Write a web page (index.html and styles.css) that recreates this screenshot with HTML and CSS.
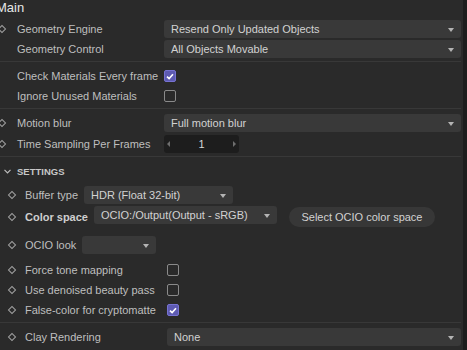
FILE: index.html
```
<!DOCTYPE html>
<html>
<head>
	<title>Render settings</title>
	<meta charset="utf-8">
	<link rel="stylesheet" href="styles.css">
</head>
<body>
	<div class="panel">
		<div class="title">Main</div>

		<div class="group top">
			<div class="row">
				<span class="key on"></span>
				<span class="label">Geometry Engine</span>
				<div class="select grow">Resend Only Updated Objects<i class="caret"></i></div>
			</div>
			<div class="row">
				<span class="key"></span>
				<span class="label">Geometry Control</span>
				<div class="select grow">All Objects Movable<i class="caret"></i></div>
			</div>
		</div>

		<div class="sep"></div>

		<div class="group top checks">
			<div class="row">
				<span class="key"></span>
				<span class="label">Check Materials Every frame</span>
				<span class="check checked"><svg width="8" height="7" viewBox="0 0 8 7"><polyline points="1,3.6 3.1,5.6 7,1.2" fill="none" stroke="#fff" stroke-width="1.6"/></svg></span>
			</div>
			<div class="row">
				<span class="key"></span>
				<span class="label">Ignore Unused Materials</span>
				<span class="check"></span>
			</div>
		</div>

		<div class="sep"></div>

		<div class="group top motion">
			<div class="row">
				<span class="key on"></span>
				<span class="label">Motion blur</span>
				<div class="select grow">Full motion blur<i class="caret"></i></div>
			</div>
			<div class="row">
				<span class="key on"></span>
				<span class="label">Time Sampling Per Frames</span>
				<div class="spin"><i class="arrow-l"></i><span>1</span><i class="arrow-r"></i></div>
			</div>
		</div>

		<div class="sep"></div>

		<div class="header">
			<svg class="chevron" width="7" height="5" viewBox="0 0 7 5"><polyline points="0.5,0.8 3.5,3.8 6.5,0.8" fill="none" stroke="#bdbdbd" stroke-width="1.2"/></svg>
			<span>SETTINGS</span>
		</div>

		<div class="group sub">
			<div class="row">
				<span class="key on"></span>
				<span class="label auto">Buffer type</span>
				<div class="select w-buffer">HDR (Float 32-bit)<i class="caret"></i></div>
			</div>
			<div class="row tall">
				<span class="key on"></span>
				<span class="label auto strong">Color space</span>
				<div class="select w-color">OCIO:/Output(Output - sRGB)<i class="caret"></i></div>
				<button class="pill">Select OCIO color space</button>
			</div>
			<div class="row look">
				<span class="key on"></span>
				<span class="label auto">OCIO look</span>
				<div class="select w-look"><i class="caret"></i></div>
			</div>
			<div class="row tone">
				<span class="key on"></span>
				<span class="label">Force tone mapping</span>
				<span class="check"></span>
			</div>
			<div class="row">
				<span class="key on"></span>
				<span class="label">Use denoised beauty pass</span>
				<span class="check"></span>
			</div>
			<div class="row">
				<span class="key on"></span>
				<span class="label">False-color for cryptomatte</span>
				<span class="check checked"><svg width="8" height="7" viewBox="0 0 8 7"><polyline points="1,3.6 3.1,5.6 7,1.2" fill="none" stroke="#fff" stroke-width="1.6"/></svg></span>
			</div>
		</div>

		<div class="sep"></div>

		<div class="group sub clay">
			<div class="row">
				<span class="key on"></span>
				<span class="label">Clay Rendering</span>
				<div class="select grow">None<i class="caret"></i></div>
			</div>
		</div>
	</div>
	<div class="gutter"></div>
</body>
</html>
```

FILE: styles.css
```
html, body {
	margin: 0;
	height: 350px;
	overflow: hidden;
}

body {
	display: flex;
	background-color: #2a2a2a;
	color: #bfbfbf;
	font-family: "Liberation Sans", Arial, sans-serif;
	font-size: 11px;
}

.panel {
	flex: 1;
	padding-right: 2px;
	overflow: hidden;
}

.gutter {
	width: 4px;
	background-color: #1d1d1d;
}

.title {
	height: 19px;
	line-height: 16px;
	margin-left: -4px;
	font-size: 13px;
	color: #e6e6e6;
}

.row {
	display: flex;
	align-items: center;
	height: 20px;
}

.key {
	flex: none;
	width: 9px;
	height: 9px;
	display: flex;
	align-items: center;
	justify-content: center;
}

.key.on::before {
	content: "";
	width: 4px;
	height: 4px;
	border: 1.4px solid #a0a0a0;
	transform: rotate(45deg);
}

.top .key {
	margin-left: -3px;
	margin-right: 11px;
}

.sub .row {
	padding-left: 7px;
}

.sub .key {
	margin-right: 9px;
}

.label {
	flex: none;
	width: 147px;
	white-space: nowrap;
}

.sub .label {
	width: 142px;
}

.sub .label.auto {
	width: auto;
	margin-right: 6px;
}

.label.strong {
	font-weight: bold;
	color: #cfcfcf;
}

.select {
	position: relative;
	box-sizing: border-box;
	height: 18px;
	line-height: 18px;
	padding-left: 7px;
	background-color: #393939;
	border-radius: 3px;
	color: #d2d2d2;
	white-space: nowrap;
}

.grow {
	flex: 1;
}

.w-buffer {
	width: 149px;
}

.w-color {
	width: 183px;
	align-self: flex-start;
}

.w-look {
	width: 74px;
}

.caret {
	position: absolute;
	right: 7px;
	top: 8px;
	border-left: 3px solid transparent;
	border-right: 3px solid transparent;
	border-top: 4px solid #b4b4b4;
}

.check {
	flex: none;
	box-sizing: border-box;
	width: 12px;
	height: 12px;
	border: 1.5px solid #8a8a8a;
	border-radius: 2px;
	display: flex;
	align-items: center;
	justify-content: center;
}

.check.checked {
	background-color: #5d5ab2;
	border-color: #7773d2;
}

.spin {
	box-sizing: border-box;
	width: 75px;
	height: 18px;
	padding: 0 3px;
	display: flex;
	align-items: center;
	justify-content: space-between;
	background-color: #1d1d1d;
	border-radius: 3px;
	color: #d6d6d6;
}

.arrow-l {
	border-top: 3px solid transparent;
	border-bottom: 3px solid transparent;
	border-right: 3px solid #6e6e6e;
}

.arrow-r {
	border-top: 3px solid transparent;
	border-bottom: 3px solid transparent;
	border-left: 3px solid #6e6e6e;
}

.sep {
	height: 1px;
	background-color: #383838;
	margin: 2px 0 4px;
}

.motion .row + .row {
	margin-top: 1px;
}

.header {
	display: flex;
	align-items: center;
	height: 20px;
	margin-top: 2px;
	font-size: 9.5px;
	font-weight: bold;
	color: #c8c8c8;
}

.chevron {
	margin-left: 4px;
	margin-right: 6px;
}

.sub {
	margin-top: 4px;
}

.row.tall {
	height: 22px;
	margin-top: 1px;
}

.pill {
	box-sizing: border-box;
	width: 146px;
	height: 20px;
	margin-left: 12px;
	padding: 0;
	border: none;
	border-radius: 10px;
	background-color: #373737;
	color: #d2d2d2;
	font-family: inherit;
	font-size: 11px;
}

.row.look {
	margin-top: 7px;
}

.row.tone {
	margin-top: 5px;
}

.clay {
	margin-top: 0;
}
```
